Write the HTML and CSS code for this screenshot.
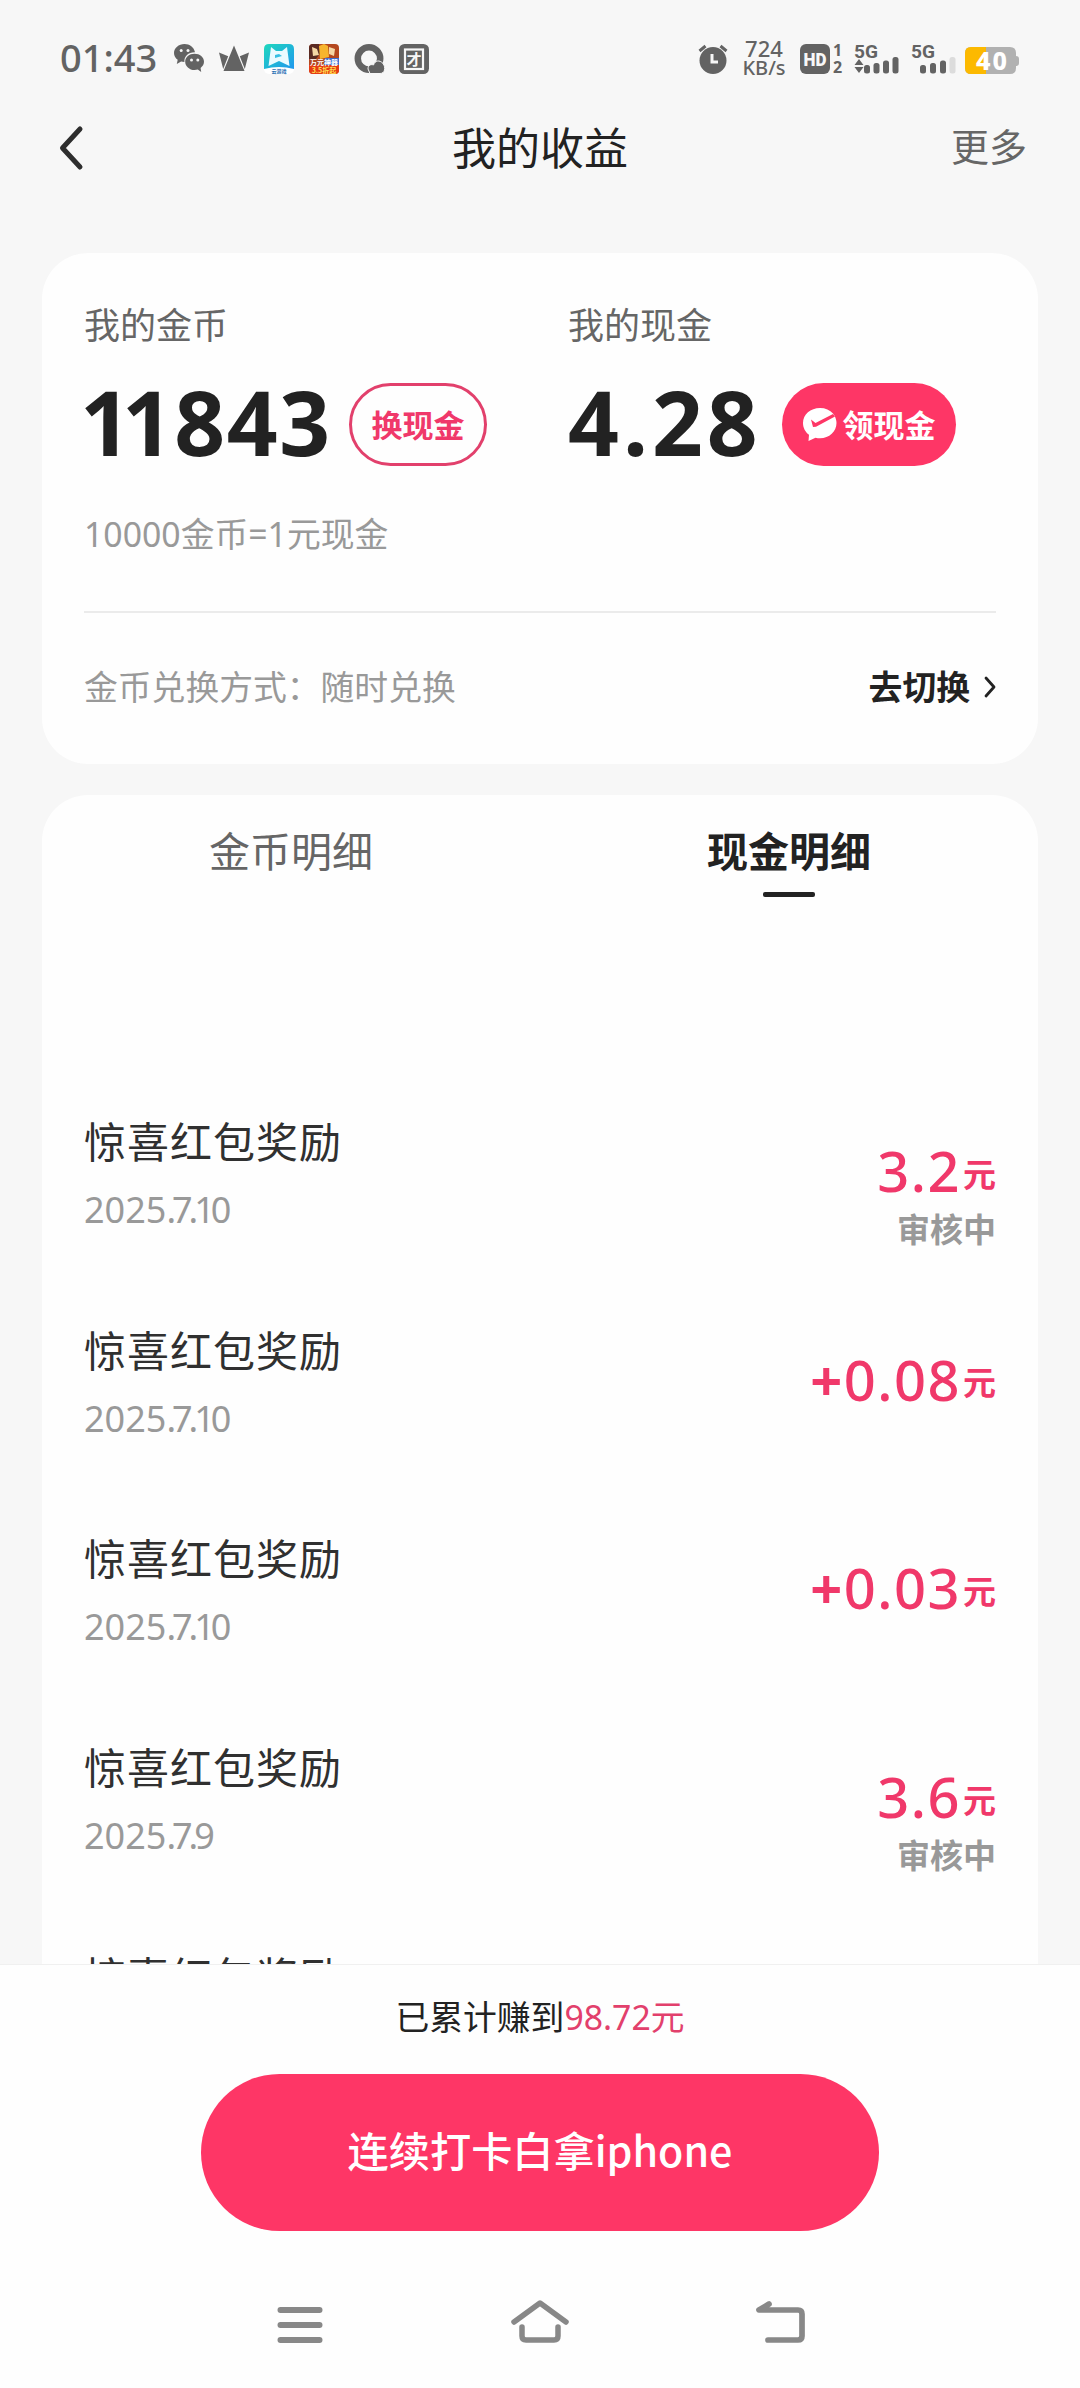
FILE: index.html
```html
<!DOCTYPE html>
<html lang="zh-CN">
<head>
<meta charset="utf-8">
<title>我的收益</title>
<link rel="stylesheet" href="styles.css">
</head>
<body>
<div class="screen">
  <header class="status">
    <div class="status-left">
      <span class="clock">01:43</span>
      <svg class="ic" viewBox="0 0 30 30"><path fill="#636363" d="M10.500 0C4.700 0 0 4 0 9c0 2.800 1.400 5.200 3.700 6.800L2.800 20l4.300-2.400c1 .3 2.100.4 3.300.4C10 12 14.500 8 21 8.200 20 3.300 15.700 0 10.500 0z"/><path fill="#636363" d="M20.500 9.800c-5.200 0-9.300 3.500-9.300 8s4.100 8.300 9.300 8.300c1.200 0 2.300-.2 3.300-.5l3.400 2.400-.6-4.100c2.100-1.500 3.400-3.600 3.400-6.100 0-4.500-4.200-8-9.500-8z"/><g fill="#f7f7f7"><circle cx="7.200" cy="6.500" r="1.500"/><circle cx="14" cy="6.500" r="1.500"/><circle cx="17.500" cy="16" r="1.500"/><circle cx="23.800" cy="16" r="1.500"/></g></svg>
      <svg class="ic" viewBox="0 0 30 30"><path fill="#636363" d="M15 1.500 25.500 27h-21zM0 8.500l9.200 3.800L4.200 25zM30 8.500l-9.200 3.800L25.800 25z"/></svg>
      <svg class="ic" viewBox="0 0 30 30"><defs><linearGradient id="sky" x1="0" y1="0" x2="1" y2="1"><stop offset="0" stop-color="#1fd8bd"/><stop offset="1" stop-color="#1f97ee"/></linearGradient></defs><rect width="30" height="30" rx="5" fill="#fff"/><path fill="url(#sky)" d="M5 0h20q5 0 5 5v20q-15-4-30 0V5q0-5 5-5z"/><path fill="#e9fbff" d="m7 3 5 4h6l5-4 2.500 19-10.500-5-10.500 5z"/><path fill="#36bfe4" d="m11 11 4-1 3 2-7 2z"/><text x="15" y="29" font-size="5" font-weight="700" text-anchor="middle" fill="#2b6fb2" font-family="Noto Sans CJK SC">云游戏</text></svg>
      <svg class="ic" viewBox="0 0 30 30"><rect width="30" height="30" rx="4" fill="#b4481f"/><path fill="#5a2a22" d="M0 4q0-4 4-4h6l2 8-5 7H0z"/><path fill="#f5d7a5" d="m3 3 5 2 2 6-6 1zM20 3l6 2-1 7-5-2z"/><path fill="#f7b52e" d="m10 2 5-2 4 2 1 11-9 2z"/><path fill="#3b6fd4" d="M16 14h14v7H15z"/><path fill="#e63b15" d="M0 21h30v5q0 4-4 4H4q-4 0-4-4z"/><text x="15" y="20.500" font-size="7" font-weight="700" text-anchor="middle" fill="#fff" font-family="Noto Sans CJK SC">万元神器</text><text x="15" y="28.500" font-size="7" font-weight="700" text-anchor="middle" fill="#ffe152" font-family="Noto Sans CJK SC">3.5折起</text></svg>
      <svg class="ic" viewBox="0 0 30 30"><circle cx="15" cy="14.500" r="11.200" fill="none" stroke="#636363" stroke-width="6.500"/><path fill="#636363" stroke="#f7f7f7" stroke-width="1" d="M14 25c0-4 3-5 5.500-4 1.500-4.500 6-5.500 9.500-1.500 3 4 2 10-3 10H16z"/></svg>
      <svg class="ic" viewBox="0 0 30 30"><rect width="30" height="30" rx="5.500" fill="#636363"/><rect x="6" y="5.500" width="18" height="19.500" fill="none" stroke="#f7f7f7" stroke-width="2.200"/><text x="15" y="21" font-size="15" font-weight="700" text-anchor="middle" fill="#f7f7f7" font-family="Noto Sans CJK SC">才</text></svg>
    </div>
    <div class="status-right">
      <svg class="alarm" viewBox="0 0 30 30"><circle cx="15" cy="16.500" r="13.500" fill="#636363"/><path d="m1.500 7 6-5M28.500 7l-6-5" stroke="#636363" stroke-width="3" fill="none"/><path d="M14 10v8h6" stroke="#f7f7f7" stroke-width="3" fill="none"/></svg>
      <span class="speed"><b class="rate-num">724</b><b>KB/s</b></span>
      <svg class="hd" viewBox="0 0 44 30"><rect width="30" height="30" rx="6" fill="#636363"/><text x="3.500" y="21.500" font-size="18" font-weight="900" fill="#f7f7f7" font-family="Roboto" textLength="23" lengthAdjust="spacingAndGlyphs">HD</text><text x="37.500" y="12" font-size="16" font-weight="700" text-anchor="middle" fill="#636363" font-family="Noto Sans">1</text><text x="37.500" y="29" font-size="16" font-weight="700" text-anchor="middle" fill="#636363" font-family="Noto Sans">2</text></svg>
      <svg class="sig" viewBox="0 0 46 32"><text x="0" y="14.500" font-size="19" font-weight="700" fill="#636363" font-family="Roboto" textLength="24" lengthAdjust="spacingAndGlyphs">5G</text><path fill="#636363" d="m5 16 4.500 6h-9zM5 30l4.500-6h-9z"/><g fill="#636363"><rect x="10" y="22" width="6" height="8.500" rx="2.500"/><rect x="19.500" y="20" width="6" height="10.500" rx="2.500"/><rect x="29" y="17.500" width="6" height="13" rx="2.500"/><rect x="38.500" y="14" width="6" height="16.500" rx="2.500"/></g></svg>
      <svg class="sig second" viewBox="0 0 46 32"><text x="0" y="14.500" font-size="19" font-weight="700" fill="#636363" font-family="Roboto" textLength="24" lengthAdjust="spacingAndGlyphs">5G</text><g fill="#636363"><rect x="9" y="22" width="6" height="8.500" rx="2.500"/><rect x="19" y="20" width="6" height="10.500" rx="2.500"/><rect x="29" y="17.500" width="6" height="13" rx="2.500"/><rect x="38.500" y="14" width="6" height="16.500" rx="2.500" fill="#dcdcdc"/></g></svg>
      <svg class="battery" viewBox="0 0 54 28"><path fill="#b1b1b1" d="M6 0h39q6 0 6 6v3q3 0 3 3v4q0 3-3 3v2q0 6-6 6H6q-6 0-6-6V6q0-6 6-6z"/><path fill="#fcb900" d="M6 0h15v27H6q-6 0-6-6V6q0-6 6-6z"/><text x="11" y="22.500" font-size="25" font-weight="800" fill="#fff" font-family="Noto Sans" textLength="31">40</text></svg>
    </div>
  </header>

  <nav class="titlebar">
    <svg class="back" viewBox="0 0 24 44"><path d="M21 3 3.500 22 21 41" fill="none" stroke="#2e2e2e" stroke-width="5" stroke-linecap="round" stroke-linejoin="round"/></svg>
    <h1 class="title">我的收益</h1>
    <a class="more">更多</a>
  </nav>

  <main class="content">
    <section class="card summary">
      <div class="balances">
        <div class="balance">
          <div class="label">我的金币</div>
          <div class="value"><span class="number coins"><i>1</i>1843</span><button class="pill outline">换现金</button></div>
        </div>
        <div class="balance">
          <div class="label">我的现金</div>
          <div class="value"><span class="number cash">4.28</span><button class="pill filled"><svg class="pay" viewBox="0 0 34 33"><path fill="#fff" d="M17 0C7.500 0 0 6.500 0 15c0 4.800 2.300 9 6 11.800L5.500 33l7-3.300c1.500.4 3 .6 4.500.6 9.300 0 16.500-6.800 16.500-15.300 0-2.500-.7-4.800-1.800-7L30 5.500C27 2 22.300 0 17 0z"/><path fill="#fe3666" d="m8 11.500 4.500 3.500L30 6l2 2.500-19 10.200-3 .3z"/></svg><span>领现金</span></button></div>
        </div>
      </div>
      <div class="rate">10000金币=1元现金</div>
      <div class="switch-row">
        <span class="mode">金币兑换方式：随时兑换</span>
        <a class="switch">去切换<svg class="chev" viewBox="0 0 12 22"><path d="m2 2 8 9-8 9" fill="none" stroke="#222" stroke-width="2.800" stroke-linecap="round" stroke-linejoin="round"/></svg></a>
      </div>
    </section>

    <section class="card detail">
      <div class="tabs">
        <div class="tab">金币明细</div>
        <div class="tab active">现金明细</div>
      </div>
      <ul class="list">
        <li class="row"><div class="info"><div class="name">惊喜红包奖励</div><div class="date">2025<i>.7.1</i>0</div></div><div class="gain"><div class="amount"><b>3.2</b><span>元</span></div><div class="state">审核中</div></div></li>
        <li class="row"><div class="info"><div class="name">惊喜红包奖励</div><div class="date">2025<i>.7.1</i>0</div></div><div class="gain"><div class="amount"><b><i>+</i>0.08</b><span>元</span></div></div></li>
        <li class="row"><div class="info"><div class="name">惊喜红包奖励</div><div class="date">2025<i>.7.1</i>0</div></div><div class="gain"><div class="amount"><b><i>+</i>0.03</b><span>元</span></div></div></li>
        <li class="row"><div class="info"><div class="name">惊喜红包奖励</div><div class="date">2025<i>.7.</i>9</div></div><div class="gain"><div class="amount"><b>3.6</b><span>元</span></div><div class="state">审核中</div></div></li>
        <li class="row"><div class="info"><div class="name">惊喜红包奖励</div></div></li>
      </ul>
    </section>
  </main>

  <footer class="bottom">
    <p class="total">已累计赚到<span>98.72元</span></p>
    <button class="cta">连续打卡白拿iphone</button>
    <div class="sysnav">
      <svg viewBox="0 0 60 50"><path d="M10.500 13h39M10.500 28h39M10.500 43h39" stroke="#888" stroke-width="6" stroke-linecap="round"/></svg>
      <svg viewBox="0 0 60 50"><path d="M4 25 30 6l26 19M12 30v9q0 4 4 4h28q4 0 4-4v-9" fill="none" stroke="#888" stroke-width="5.500" stroke-linecap="round" stroke-linejoin="round"/></svg>
      <svg viewBox="0 0 60 50"><path d="M19 7 9 13h39q4 0 4 4v22q0 4-4 4H18" fill="none" stroke="#888" stroke-width="5.700" stroke-linecap="round" stroke-linejoin="round"/></svg>
    </div>
  </footer>
</div>
</body>
</html>
```
FILE: styles.css
```css
* { box-sizing: border-box; margin: 0; padding: 0; }
body { background: #f7f7f7; }
i { font-style: normal; }
button { border: 0; background: none; font: inherit; color: inherit; }
svg { display: block; flex: none; overflow: visible; }

.screen {
  width: 1080px;
  height: 2388px;
  display: flex;
  flex-direction: column;
  overflow: hidden;
  background: #f7f7f7;
  color: #222;
  font-family: "Noto Sans", "Noto Sans CJK SC", sans-serif;
}

.status {
  flex: none;
  height: 118px;
  padding: 0 61px 0 60px;
  display: flex;
  justify-content: space-between;
  align-items: center;
  color: #636363;
}
.status-left { display: flex; align-items: center; gap: 15px; }
.clock { width: 99px; padding-bottom: 4px; font-size: 38px; font-weight: 500; line-height: 48px; white-space: nowrap; }
.ic { width: 30px; height: 30px; }
.status-right { display: flex; align-items: center; }
.alarm { width: 30px; height: 30px; }
.speed { width: 72px; padding-bottom: 3px; display: flex; flex-direction: column; align-items: center; }
.speed b { font-size: 20px; line-height: 19px; font-weight: 500; }
.speed .rate-num { font-size: 22px; }
.hd { width: 44px; height: 30px; }
.sig { width: 46px; height: 32px; margin-left: 10px; }
.sig.second { margin-left: 11px; margin-right: 8px; }
.battery { width: 54px; height: 28px; margin-top: 3px; }

.titlebar {
  flex: none;
  height: 60px;
  padding: 0 53px;
  display: grid;
  grid-template-columns: 1fr auto 1fr;
  align-items: center;
}
.back { width: 24px; height: 44px; margin-left: 6px; }
.title { font-size: 44px; line-height: 60px; font-weight: 400; }
.more { justify-self: end; padding-bottom: 4px; font-size: 38px; line-height: 56px; color: #666; }

.content { flex: 1; min-height: 0; overflow: hidden; padding: 75px 42px 0; }
.card { background: #fefefe; border-radius: 46px; padding: 0 42px; }

.summary { height: 511px; padding-top: 47px; margin-bottom: 31px; }
.balances { display: grid; grid-template-columns: 484px 1fr; }
.label { font-size: 36px; line-height: 52px; color: #666; }
.value { display: flex; align-items: center; height: 83px; margin-top: 31px; }
.number { padding-bottom: 6px; font-size: 89px; line-height: 83px; font-weight: 700; white-space: nowrap; }
.coins { width: 269px; margin-left: -4px; letter-spacing: 1.500px; }
.coins i { letter-spacing: -9px; }
.cash { width: 214px; letter-spacing: 4px; }
.pill {
  height: 83px;
  border-radius: 42px;
  display: flex;
  align-items: center;
  justify-content: center;
  padding-bottom: 3px;
  font-size: 31px;
  font-weight: 700;
  white-space: nowrap;
}
.outline { width: 138px; border: 3px solid #e2406c; color: #f0386a; }
.filled { width: 174px; background: #fe3666; color: #fff; gap: 6px; padding-bottom: 0; }
.filled span { padding-bottom: 3px; }
.pay { width: 34px; height: 33px; }
.rate { margin-top: 43px; height: 50px; font-size: 33.800px; line-height: 50px; color: #999; }
.switch-row {
  margin-top: 52px;
  border-top: 2px solid #ebebeb;
  padding-top: 49px;
  display: flex;
  justify-content: space-between;
  align-items: center;
  font-size: 33.800px;
  line-height: 50px;
}
.mode { color: #999; }
.switch { display: flex; align-items: center; gap: 14px; font-weight: 700; }
.chev { width: 12px; height: 22px; }

.detail { height: 1300px; border-radius: 46px 46px 0 0; }
.tabs { height: 104px; margin: 0 -42px; display: grid; grid-template-columns: 1fr 1fr; }
.tab { padding-top: 26px; display: flex; flex-direction: column; align-items: center; gap: 11px; font-size: 41px; line-height: 60px; color: #666; }
.active { color: #222; font-weight: 700; }
.active::after { content: ""; width: 52px; height: 5px; border-radius: 2px; background: #222; }

.list { list-style: none; margin-top: 212px; }
.row { height: 208.700px; display: flex; justify-content: space-between; }
.name { font-size: 42px; line-height: 62px; letter-spacing: 1px; color: #303030; }
.date { margin-top: 14px; font-size: 36px; line-height: 46px; color: #999; }
.date i { letter-spacing: -4px; }
.gain { padding-top: 24px; text-align: right; }
.amount { height: 70px; line-height: 72px; font-size: 34px; font-weight: 700; color: #f0386a; display: flex; align-items: center; justify-content: flex-end; gap: 2px; }
.amount b { font-size: 56px; font-weight: 500; letter-spacing: 1.500px; }
.amount i { font-weight: 700; }
.amount span { padding-top: 9px; font-size: 33px; }
.state { font-size: 33px; line-height: 50px; font-weight: 700; color: #999; }

.bottom {
  flex: none;
  height: 424px;
  border-top: 1px solid #f0f0f0;
  background: #fefefe;
  display: flex;
  flex-direction: column;
  align-items: center;
}
.total { margin-top: 27px; font-size: 33.800px; line-height: 50px; }
.total span { color: #e2406c; }
.cta {
  margin-top: 32px;
  width: 678px;
  height: 157px;
  padding-bottom: 8px;
  border-radius: 79px;
  background: #fe3666;
  color: #fff;
  font: 500 41.200px/60px "Noto Sans CJK SC", sans-serif;
}
.sysnav { width: 540px; margin-top: 66px; display: flex; justify-content: space-between; }
.sysnav svg { width: 60px; height: 50px; }
```
